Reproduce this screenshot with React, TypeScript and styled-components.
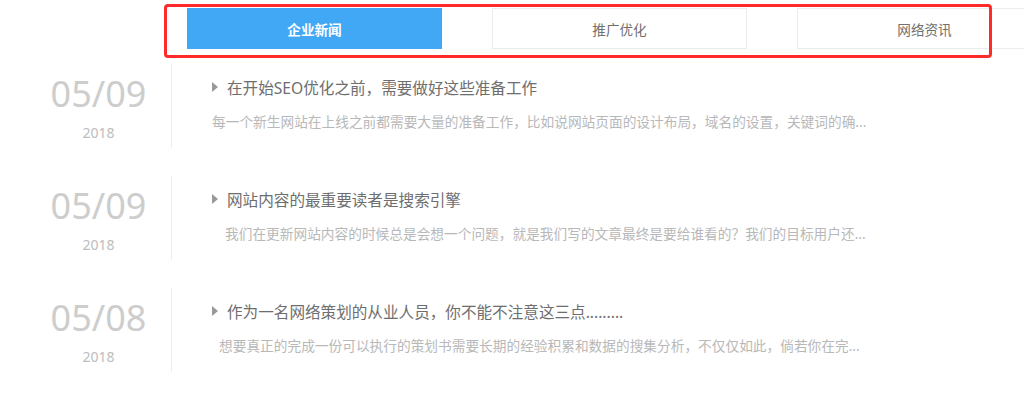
import React from "react";
import styled, { createGlobalStyle } from "styled-components";

const GlobalStyle = createGlobalStyle`
  html, body {
    margin: 0;
    padding: 0;
    background: #ffffff;
    overflow: hidden;
  }
  body {
    font-family: "Noto Sans", "Noto Sans CJK SC", sans-serif;
  }
`;

const Page = styled.div`
  position: relative;
  width: 1024px;
  height: 396px;
  overflow: hidden;
`;

const TabRow = styled.div`
  display: flex;
  gap: 50px;
  padding: 8px 0 0 187px;
`;

const Tab = styled.div<{ $active?: boolean }>`
  flex: 0 0 255px;
  height: 41px;
  box-sizing: border-box;
  display: flex;
  align-items: center;
  justify-content: center;
  font-size: 13.6px;
  border: 1px solid ${(p) => (p.$active ? "#41a8f5" : "#ececec")};
  background: ${(p) => (p.$active ? "#41a8f5" : "#ffffff")};
  color: ${(p) => (p.$active ? "#ffffff" : "#707070")};
  font-weight: ${(p) => (p.$active ? 700 : 400)};
`;

const Highlight = styled.div`
  position: absolute;
  left: 164px;
  top: 4px;
  width: 828px;
  height: 54px;
  box-sizing: border-box;
  border: 3px solid #ff2a2a;
  border-radius: 4px;
  pointer-events: none;
`;

const List = styled.div`
  display: flex;
  flex-direction: column;
  gap: 28px;
  padding: 15px 0 0 26px;
`;

const Item = styled.div`
  display: flex;
  height: 84px;
`;

const DateCol = styled.div`
  width: 146px;
  box-sizing: border-box;
  border-right: 1px solid #ededed;
  display: flex;
  flex-direction: column;
  align-items: center;
  padding-top: 12px;
`;

const Day = styled.div`
  font-size: 36px;
  line-height: 36px;
  color: #cdcdcd;
`;

const Year = styled.div`
  margin-top: 14px;
  font-size: 14px;
  line-height: 14px;
  color: #bdbdbd;
`;

const Content = styled.div`
  flex: 1;
  padding: 11px 0 0 40px;
`;

const Title = styled.div`
  display: flex;
  align-items: center;
  height: 24px;
  font-size: 15.6px;
  color: #6e6e6e;
  white-space: nowrap;
`;

const Arrow = styled.span`
  width: 0;
  height: 0;
  border-top: 5px solid transparent;
  border-bottom: 5px solid transparent;
  border-left: 6px solid #999999;
  margin-right: 9px;
  flex-shrink: 0;
`;

const Desc = styled.div<{ $indent: number }>`
  margin-top: 12px;
  padding-left: ${(p) => p.$indent}px;
  height: 22px;
  line-height: 22px;
  font-size: 13.7px;
  color: #b8b8b8;
  white-space: nowrap;
`;

const tabs = [
  { label: "企业新闻", active: true },
  { label: "推广优化", active: false },
  { label: "网络资讯", active: false },
];

const news = [
  {
    day: "05/09",
    year: "2018",
    title: "在开始SEO优化之前，需要做好这些准备工作",
    desc: "每一个新生网站在上线之前都需要大量的准备工作，比如说网站页面的设计布局，域名的设置，关键词的确...",
    indent: 0,
  },
  {
    day: "05/09",
    year: "2018",
    title: "网站内容的最重要读者是搜索引擎",
    desc: "我们在更新网站内容的时候总是会想一个问题，就是我们写的文章最终是要给谁看的？我们的目标用户还...",
    indent: 13,
  },
  {
    day: "05/08",
    year: "2018",
    title: "作为一名网络策划的从业人员，你不能不注意这三点.........",
    desc: "想要真正的完成一份可以执行的策划书需要长期的经验积累和数据的搜集分析，不仅仅如此，倘若你在完...",
    indent: 7,
  },
];

export default function App() {
  return (
    <Page>
      <GlobalStyle />
      <TabRow>
        {tabs.map((t) => (
          <Tab key={t.label} $active={t.active}>
            {t.label}
          </Tab>
        ))}
      </TabRow>
      <List>
        {news.map((n, i) => (
          <Item key={i}>
            <DateCol>
              <Day>{n.day}</Day>
              <Year>{n.year}</Year>
            </DateCol>
            <Content>
              <Title>
                <Arrow />
                {n.title}
              </Title>
              <Desc $indent={n.indent}>{n.desc}</Desc>
            </Content>
          </Item>
        ))}
      </List>
      <Highlight />
    </Page>
  );
}
